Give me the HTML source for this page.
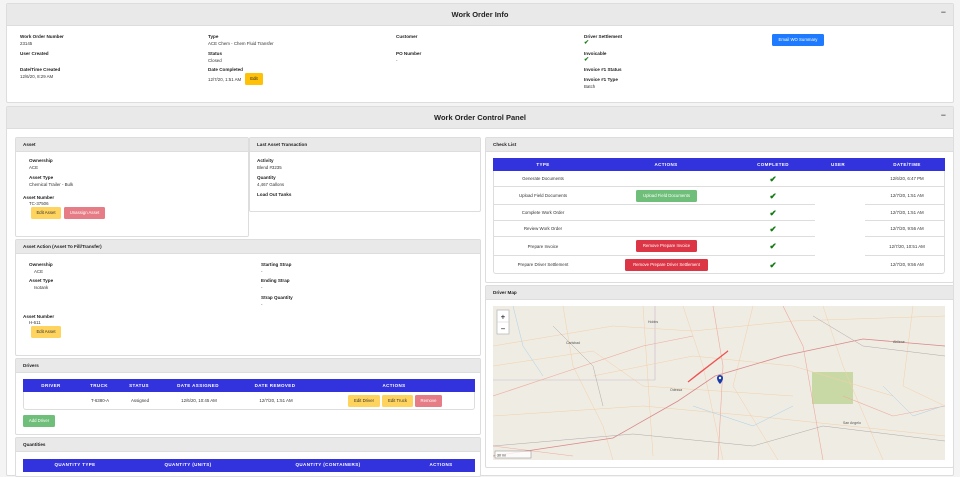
<!DOCTYPE html>
<html><head><meta charset="utf-8"><style>
*{box-sizing:border-box;margin:0;padding:0}
body{width:960px;height:471px;overflow:hidden;background:#f4f4f4;font-family:"Liberation Sans",Arial,sans-serif;color:#222;position:relative}
.a{position:absolute}
.card{position:absolute;background:#fff;border:1px solid #ddd;border-radius:2px}
.hd{position:absolute;left:0;right:0;top:0;background:#e9e9e9;border-bottom:1px solid #ddd}
.big{font-size:7.5px;font-weight:bold;text-align:center}
.sh{font-size:4.6px;font-weight:bold;padding-left:7px}
.l{position:absolute;font-size:4.6px;font-weight:bold;white-space:nowrap}
.v{position:absolute;font-size:4.4px;color:#333;white-space:nowrap}
.btn{position:absolute;font-size:4.3px;text-align:center;border-radius:1.5px;white-space:nowrap}
.y{background:#ffd45e;color:#333}
.r{background:#e57c86;color:#fff}
.R{background:#dc3545;color:#fff}
.g{background:#6fbf7a;color:#fff}
.th{position:absolute;background:#3333dd;color:#fff;font-size:4.5px;font-weight:bold;letter-spacing:.4px}
.th span,.row span{position:absolute;transform:translateX(-50%);white-space:nowrap}
.row{position:absolute;border-bottom:1px solid #ddd;font-size:4.4px;color:#333}
.ck{color:#137a13;font-size:8.5px;font-weight:bold}
</style></head><body>

<div class="card" style="left:6px;top:3px;width:948px;height:100px">
 <div class="hd" style="height:22px"><div class="big" style="line-height:22px">Work Order Info</div><div class="a" style="right:7px;top:3px;font-size:9px">−</div></div>
</div>
<div class="l" style="left:20px;top:34px">Work Order Number</div><div class="v" style="left:20px;top:41px">23145</div>
<div class="l" style="left:20px;top:51px">User Created</div>
<div class="l" style="left:20px;top:67px">Date/Time Created</div><div class="v" style="left:20px;top:74px">12/6/20, 8:29 AM</div>
<div class="l" style="left:208px;top:34px">Type</div><div class="v" style="left:208px;top:41px">ACE Chem - Chem Fluid Transfer</div>
<div class="l" style="left:208px;top:51px">Status</div><div class="v" style="left:208px;top:58px">Closed</div>
<div class="l" style="left:208px;top:67px">Date Completed</div><div class="v" style="left:208px;top:77px">12/7/20, 1:51 AM</div>
<div class="btn" style="left:245px;top:73px;width:18px;height:12px;line-height:12px;background:#ffc107">Edit</div>
<div class="l" style="left:396px;top:34px">Customer</div>
<div class="l" style="left:396px;top:51px">PO Number</div><div class="v" style="left:396px;top:58px">-</div>
<div class="l" style="left:584px;top:34px">Driver Settlement</div><div class="v ck" style="left:584px;top:39px;font-size:6px">✔</div>
<div class="l" style="left:584px;top:51px">Invoicable</div><div class="v ck" style="left:584px;top:56px;font-size:6px">✔</div>
<div class="l" style="left:584px;top:67px">Invoice #1 Status</div>
<div class="l" style="left:584px;top:77px">Invoice #1 Type</div><div class="v" style="left:584px;top:84px">Batch</div>
<div class="btn" style="left:772px;top:34px;width:52px;height:12px;line-height:12px;background:#1e7bff;color:#fff">Email WO Summary</div>

<div class="card" style="left:6px;top:106px;width:948px;height:370px">
 <div class="hd" style="height:22px"><div class="big" style="line-height:22px">Work Order Control Panel</div><div class="a" style="right:7px;top:3px;font-size:9px">−</div></div>
</div>

<div class="card" style="left:15px;top:137px;width:234px;height:100px"><div class="hd" style="height:14px"><div class="sh" style="line-height:14px">Asset</div></div></div>
<div class="l" style="left:29px;top:158px">Ownership</div><div class="v" style="left:29px;top:165px">ACE</div>
<div class="l" style="left:29px;top:175px">Asset Type</div><div class="v" style="left:29px;top:182px">Chemical Trailer - Bulk</div>
<div class="l" style="left:23px;top:195px">Asset Number</div><div class="v" style="left:29px;top:201px">TC-37506</div>
<div class="btn y" style="left:31px;top:207px;width:30px;height:12px;line-height:12px">Edit Asset</div>
<div class="btn r" style="left:64px;top:207px;width:41px;height:12px;line-height:12px">Unassign Asset</div>

<div class="card" style="left:249px;top:137px;width:232px;height:75px"><div class="hd" style="height:14px"><div class="sh" style="line-height:14px">Last Asset Transaction</div></div></div>
<div class="l" style="left:257px;top:158px">Activity</div><div class="v" style="left:257px;top:165px">Blend #3235</div>
<div class="l" style="left:257px;top:175px">Quantity</div><div class="v" style="left:257px;top:182px">4,467 Gallons</div>
<div class="l" style="left:257px;top:192px">Load Out Tanks</div>

<div class="card" style="left:15px;top:239px;width:466px;height:117px"><div class="hd" style="height:14px"><div class="sh" style="line-height:14px">Asset Action (Asset To Fill/Transfer)</div></div></div>
<div class="l" style="left:29px;top:262px">Ownership</div><div class="v" style="left:34px;top:269px">ACE</div>
<div class="l" style="left:29px;top:278px">Asset Type</div><div class="v" style="left:34px;top:285px">Isotank</div>
<div class="l" style="left:23px;top:314px">Asset Number</div><div class="v" style="left:29px;top:320px">H-611</div>
<div class="btn y" style="left:31px;top:326px;width:30px;height:12px;line-height:12px">Edit Asset</div>
<div class="l" style="left:261px;top:262px">Starting Strap</div><div class="v" style="left:261px;top:269px">-</div>
<div class="l" style="left:261px;top:278px">Ending Strap</div><div class="v" style="left:261px;top:285px">-</div>
<div class="l" style="left:261px;top:295px">Strap Quantity</div><div class="v" style="left:261px;top:302px">-</div>

<div class="card" style="left:15px;top:358px;width:466px;height:77px"><div class="hd" style="height:14px"><div class="sh" style="line-height:14px">Drivers</div></div></div>
<div class="th" style="left:23px;top:379px;width:452px;height:13px;line-height:13px"><span style="left:28px">DRIVER</span><span style="left:76px">TRUCK</span><span style="left:116px">STATUS</span><span style="left:175px">DATE ASSIGNED</span><span style="left:252px">DATE REMOVED</span><span style="left:371px">ACTIONS</span></div>
<div class="row" style="left:23px;top:392px;width:452px;height:18px;line-height:17px;border:1px solid #ddd;border-top:none;border-radius:0 0 3px 3px"><span style="left:76px">T-6380-A</span><span style="left:116px">Assigned</span><span style="left:175px">12/6/20, 10:45 AM</span><span style="left:252px">12/7/20, 1:51 AM</span></div>
<div class="btn y" style="left:348px;top:395px;width:32px;height:12px;line-height:12px">Edit Driver</div>
<div class="btn y" style="left:382px;top:395px;width:31px;height:12px;line-height:12px">Edit Truck</div>
<div class="btn r" style="left:415px;top:395px;width:27px;height:12px;line-height:12px">Remove</div>
<div class="btn g" style="left:23px;top:415px;width:32px;height:12px;line-height:12px">Add Driver</div>

<div class="card" style="left:15px;top:437px;width:466px;height:40px"><div class="hd" style="height:14px"><div class="sh" style="line-height:14px">Quantities</div></div></div>
<div class="th" style="left:23px;top:459px;width:452px;height:13px;line-height:12px"><span style="left:52px">QUANTITY TYPE</span><span style="left:165px">QUANTITY (UNITS)</span><span style="left:305px">QUANTITY (CONTAINERS)</span><span style="left:418px">ACTIONS</span></div>

<div class="card" style="left:485px;top:137px;width:469px;height:146px"><div class="hd" style="height:14px"><div class="sh" style="line-height:14px">Check List</div></div></div>
<div class="th" style="left:493px;top:158px;width:452px;height:13px;line-height:13px"><span style="left:50px">TYPE</span><span style="left:173px">ACTIONS</span><span style="left:280px">COMPLETED</span><span style="left:345px">USER</span><span style="left:414px">DATE/TIME</span></div>
<div class="a" style="left:493px;top:171px;width:452px;height:103px;border:1px solid #ddd;border-top:none;border-radius:0 0 3px 3px"></div>
<div class="row" style="left:493px;top:171px;width:452px;height:16px;line-height:16px"><span style="left:50px">Generate Documents</span><span class="ck" style="left:280px">✔</span><span style="left:414px">12/6/20, 6:47 PM</span></div>
<div class="row" style="left:493px;top:187px;width:452px;height:18px;line-height:18px"><span style="left:50px">Upload Field Documents</span><span class="ck" style="left:280px">✔</span><span style="left:414px">12/7/20, 1:51 AM</span></div>
<div class="btn g" style="left:636px;top:190px;width:61px;height:12px;line-height:12px">Upload Field Documents</div>
<div class="row" style="left:493px;top:205px;width:452px;height:16px;line-height:16px"><span style="left:50px">Complete Work Order</span><span class="ck" style="left:280px">✔</span><span style="left:414px">12/7/20, 1:51 AM</span></div>
<div class="row" style="left:493px;top:221px;width:452px;height:16px;line-height:16px"><span style="left:50px">Review Work Order</span><span class="ck" style="left:280px">✔</span><span style="left:414px">12/7/20, 9:56 AM</span></div>
<div class="row" style="left:493px;top:237px;width:452px;height:19px;line-height:19px"><span style="left:50px">Prepare Invoice</span><span class="ck" style="left:280px">✔</span><span style="left:414px">12/7/20, 10:51 AM</span></div>
<div class="btn R" style="left:636px;top:240px;width:61px;height:12px;line-height:12px">Remove Prepare Invoice</div>
<div class="row" style="left:493px;top:256px;width:452px;height:18px;line-height:18px;border:none"><span style="left:50px">Prepare Driver Settlement</span><span class="ck" style="left:280px">✔</span><span style="left:414px">12/7/20, 9:56 AM</span></div>
<div class="btn R" style="left:625px;top:259px;width:83px;height:12px;line-height:12px">Remove Prepare Driver Settlement</div>
<div class="a" style="left:815px;top:187px;width:50px;height:69px;background:#fff"></div>

<div class="card" style="left:485px;top:285px;width:469px;height:183px"><div class="hd" style="height:14px"><div class="sh" style="line-height:14px">Driver Map</div></div></div>
<svg class="a" style="left:493px;top:306px" width="452" height="154" viewBox="0 0 452 154">
 <rect width="452" height="154" fill="#efece4"/>
 <rect x="319" y="66" width="41" height="32" fill="#c9d9a6"/>
 <polyline points="0,74 162,74 162,0" fill="none" stroke="#c8b8c8" stroke-width="0.6"/>
 <g fill="none" stroke="#f3cfa8" stroke-width="0.5">
  <path d="M0,40 L120,20 L200,25 L300,15 L452,10"/><path d="M70,0 L80,60 L110,120 L120,154"/>
  <path d="M190,0 L210,60 L230,154"/><path d="M260,0 L240,80 L285,154"/><path d="M330,0 L350,60 L390,154"/>
  <path d="M0,110 L150,100 L260,110 L452,130"/><path d="M420,0 L410,80 L452,100"/><path d="M100,70 L200,50 L300,60 L400,90"/>
  <path d="M0,60 L100,45 L150,80 L300,90"/><path d="M150,0 L160,150"/>
 </g>
 <g fill="none" stroke="#eeaa9c" stroke-width="0.6">
  <path d="M0,150 L120,132 L185,95 L222,70 L290,50 L370,33 L452,40" stroke="#d88888" stroke-width="0.8"/>
  <path d="M0,140 L80,150"/><path d="M220,0 L230,60 L225,154"/><path d="M290,0 L310,40 L330,154"/>
  <path d="M0,90 L60,70 L150,40 L200,30"/><path d="M350,90 L400,110 L452,100"/>
 </g>
 <g fill="none" stroke="#b0a8a8" stroke-width="0.5"><path d="M0,140 L140,128 L260,140 L330,120 L452,135"/><path d="M60,20 L100,60 L110,100"/><path d="M320,10 L370,40 L452,50"/></g>
 <g fill="none" stroke="#a8d0e8" stroke-width="0.5"><path d="M20,0 L30,40 L50,70"/><path d="M200,100 L260,120 L300,100"/><path d="M390,80 L420,110 L450,100"/></g>
 <path d="M195,76 L235,45 L205,68 Z" fill="none" stroke="#f05050" stroke-width="1.2"/>
 <g font-family="Liberation Sans,sans-serif" font-size="3.5" fill="#555"><text x="155" y="17">Hobbs</text><text x="73" y="38">Carlsbad</text><text x="177" y="85">Odessa</text><text x="350" y="118">San Angelo</text><text x="400" y="37">Abilene</text></g>
 <path d="M224,72 a3,3 0 1 1 6,0 c0,3 -3,6 -3,6 c0,0 -3,-3 -3,-6z" fill="#1a3aa8"/><circle cx="227" cy="72" r="1.2" fill="#fff"/>
 <rect x="4" y="4" width="12" height="24" fill="#fff" stroke="#bbb" stroke-width="0.8"/><line x1="4" y1="16" x2="16" y2="16" stroke="#ccc" stroke-width="0.5"/>
 <text x="10" y="13.5" font-size="8" text-anchor="middle" font-family="Liberation Sans">+</text><text x="10" y="25.5" font-size="8" text-anchor="middle" font-family="Liberation Sans">−</text>
 <rect x="2" y="145" width="36" height="7" fill="#fff" fill-opacity=".8" stroke="#888" stroke-width="0.5"/><text x="4" y="150.5" font-size="3.5" font-family="Liberation Sans" fill="#333">30 mi</text>
</svg>
</body></html>
